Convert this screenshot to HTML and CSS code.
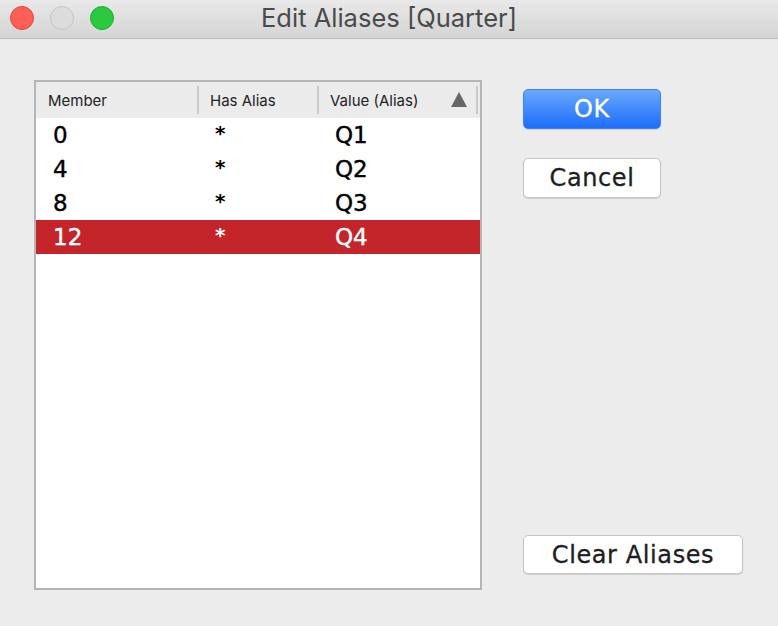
FILE: index.html
```html
<!DOCTYPE html>
<html>
<head>
<meta charset="utf-8">
<link rel="stylesheet" href="styles.css">
</head>
<body>
<div class="window">
  <div class="titlebar">
    <div class="lights">
      <span class="light red"></span>
      <span class="light gray"></span>
      <span class="light green"></span>
    </div>
    <div class="title">Edit Aliases [Quarter]</div>
  </div>
  <div class="content">
    <div class="table">
      <div class="thead">
        <div class="th c1">Member</div>
        <div class="th c2">Has Alias</div>
        <div class="th c3">Value (Alias)<span class="sort"></span></div>
      </div>
      <div class="row"><div class="td c1">0</div><div class="td c2"><span class="star">*</span></div><div class="td c3">Q1</div></div>
      <div class="row"><div class="td c1">4</div><div class="td c2"><span class="star">*</span></div><div class="td c3">Q2</div></div>
      <div class="row"><div class="td c1">8</div><div class="td c2"><span class="star">*</span></div><div class="td c3">Q3</div></div>
      <div class="row selected"><div class="td c1">12</div><div class="td c2"><span class="star">*</span></div><div class="td c3">Q4</div></div>
    </div>
    <div class="buttons">
      <button class="btn primary">OK</button>
      <button class="btn">Cancel</button>
      <div class="spacer"></div>
      <button class="btn wide">Clear Aliases</button>
    </div>
  </div>
</div>
</body>
</html>
```
FILE: styles.css
```css
html, body {
  margin: 0;
  padding: 0;
  background: #ececec;
}
.window {
  width: 778px;
  height: 626px;
  background: #ececec;
  display: flex;
  flex-direction: column;
}
.titlebar {
  height: 38px;
  border-bottom: 1px solid #b9b9b9;
  background: linear-gradient(#e9e9e9, #d4d4d4);
  display: flex;
  align-items: center;
  position: relative;
}
.lights {
  display: flex;
  gap: 16px;
  padding-left: 10px;
  margin-top: -2px;
}
.light {
  width: 24px;
  height: 24px;
  border-radius: 50%;
  box-sizing: border-box;
}
.light.red { background: #fe5f57; border: 1px solid #e0443e; }
.light.gray { background: #dcdcdc; border: 1px solid #c4c4c4; }
.light.green { background: #2ac940; border: 1px solid #1dad2b; }
.title {
  position: absolute;
  left: 0;
  right: 0;
  top: 3px;
  text-align: center;
  font-family: "Inter", "Roboto", sans-serif;
  font-size: 25.5px;
  color: #4a4a4a;
  line-height: 30px;
}
.content {
  flex: 1;
  display: flex;
  padding: 41px 0 0 34px;
}
.table {
  width: 444px;
  height: 506px;
  border: 2px solid #b5b5b5;
  background: #fff;
}
.thead, .row {
  display: grid;
  grid-template-columns: 163px 120px 1fr;
}
.thead {
  height: 36px;
  background: #ebebeb;
}
.th {
  font-family: "Inter", "Roboto", sans-serif;
  font-size: 15px;
  color: #222;
  display: flex;
  align-items: center;
  padding-left: 12px;
  position: relative;
}
.th.c2, .th.c3 { padding-left: 11px; }
.th.c1::after, .th.c2::after, .th.c3::after {
  content: "";
  position: absolute;
  right: 0;
  top: 4px;
  bottom: 4px;
  width: 2px;
  background: #c9c9c9;
}
.th.c3::after { right: 2px; }
.sort {
  position: absolute;
  right: 13px;
  top: 10px;
  width: 0;
  height: 0;
  border-left: 8px solid transparent;
  border-right: 8px solid transparent;
  border-bottom: 15px solid #666;
}
.row {
  height: 34px;
  font-family: "DejaVu Sans", sans-serif;
  font-size: 23px;
  color: #000;
  -webkit-text-stroke: 0.4px currentColor;
}
.td {
  display: flex;
  align-items: center;
  padding-left: 16px;
}
.td.c1 { padding-left: 17px; }
.star {
  font-size: 20px;
  font-weight: bold;
  -webkit-text-stroke: 0;
  margin-top: -4px;
}
.row.selected {
  background: #c4252b;
  color: #fff;
}
.buttons {
  display: flex;
  flex-direction: column;
  align-items: flex-start;
  padding-left: 41px;
  padding-top: 9px;
  height: 494px;
  box-sizing: border-box;
}
.btn {
  width: 138px;
  height: 40px;
  border: 1px solid #c4c4c4;
  border-radius: 5px;
  background: #fff;
  font-family: "DejaVu Sans", sans-serif;
  font-size: 24px;
  letter-spacing: 0.6px;
  color: #1e1e1e;
  -webkit-text-stroke: 0.3px currentColor;
  padding: 0;
  box-shadow: 0 1px 1px rgba(0,0,0,0.12);
}
.btn + .btn { margin-top: 29px; }
.btn.primary {
  background: linear-gradient(#6ba8fb, #1b6efb);
  border: 1px solid #3f83f0;
  color: #fff;
}
.spacer { flex: 1; }
.btn.wide { width: 220px; height: 39px; }
```
